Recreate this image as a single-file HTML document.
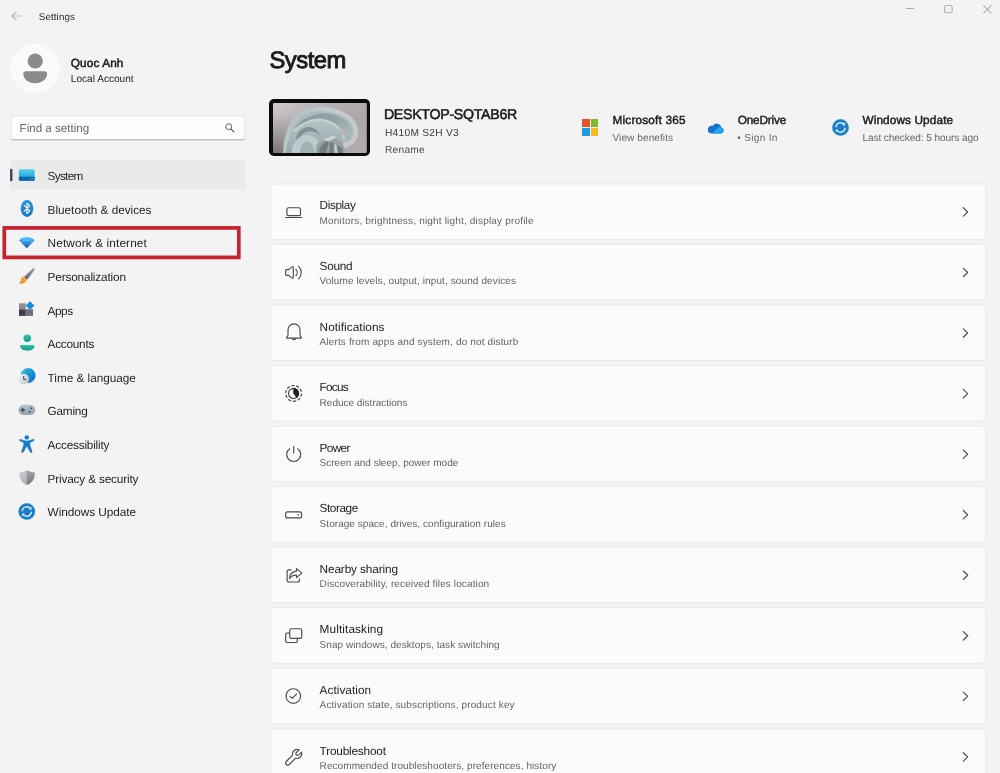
<!DOCTYPE html>
<html><head><meta charset="utf-8"><title>Settings</title>
<style>
*{box-sizing:border-box;margin:0;padding:0}
html,body{width:1000px;height:773px;overflow:hidden;background:#f3f3f3}
body{font-family:"Liberation Sans",sans-serif;color:#1b1b1b;position:relative}
.t{position:absolute;white-space:nowrap;line-height:1}
.abs{position:absolute}
svg{position:absolute;overflow:visible}
</style></head><body>

<!-- title bar -->
<svg style="left:10.9px;top:11px" width="11" height="10" viewBox="0 0 11 10"><path d="M10.5 5H1M4.8 1L.8 5l4 4" fill="none" stroke="#bdbdbd" stroke-width="1.1" stroke-linecap="round" stroke-linejoin="round"/></svg>
<svg style="left:906px;top:8.1px" width="8" height="1" viewBox="0 0 8 1"><path d="M0 .5h8" stroke="#ababab" stroke-width="1"/></svg>
<svg style="left:944.2px;top:5.2px" width="8.7" height="8.3" viewBox="0 0 8.7 8.3"><rect x=".55" y=".55" width="7.6" height="7.2" rx="1.5" fill="none" stroke="#b3b3b3" stroke-width="1.1"/></svg>
<svg style="left:983px;top:5px" width="8.8" height="8.8" viewBox="0 0 8.8 8.8"><path d="M.3.3l8.2 8.2M8.5.3l-8.2 8.2" stroke="#a8a8a8" stroke-width="1.05"/></svg>

<!-- avatar -->
<svg style="left:0;top:0" width="70" height="100" viewBox="0 0 70 100"><circle cx="35.2" cy="68.5" r="25" fill="#fafafa"/></svg>
<svg style="left:22px;top:52.8px" width="26" height="31" viewBox="0 0 26 31"><circle cx="13.2" cy="8" r="7.6" fill="#8b8b8b"/><path d="M3.9 18.2h18.6a2.6 2.6 0 0 1 2.6 2.6c0 5.4-4.9 9.4-11.9 9.4S1.3 26.2 1.3 20.8a2.6 2.6 0 0 1 2.6-2.6z" fill="#8b8b8b"/></svg>

<!-- search -->
<svg style="left:0;top:0" width="250" height="150" viewBox="0 0 250 150"><defs><clipPath id="sbc"><rect x="10.5" y="115.2" width="234.8" height="25.2" rx="3.5"/></clipPath></defs><rect x="11" y="115.7" width="233.8" height="24.2" rx="3.2" fill="#fdfdfd" stroke="#e3e3e3" stroke-width="1"/><rect x="10.5" y="139.5" width="234.8" height=".9" fill="#8f8f8f" clip-path="url(#sbc)"/></svg>
<svg style="left:224.8px;top:123.4px" width="10" height="10" viewBox="0 0 10 10"><circle cx="3.7" cy="3.7" r="3" fill="none" stroke="#5f5f5f" stroke-width="1"/><path d="M6 6l3 3" stroke="#5f5f5f" stroke-width="1.1" stroke-linecap="round"/></svg>

<!-- nav -->
<svg style="left:0;top:0" width="250" height="200" viewBox="0 0 250 200"><rect x="10" y="160.2" width="235.5" height="29.4" rx="3.5" fill="#eaeaea"/><rect x="10" y="168.7" width="2.5" height="12.5" rx="1.25" fill="#3d4a63"/></svg>
<svg style="left:0;top:0" width="250" height="270" viewBox="0 0 250 270"><rect x="4.3" y="227.9" width="234.5" height="29.5" fill="none" stroke="#c6232f" stroke-width="3.7"/></svg>

<!-- device thumbnail -->
<div class="abs" style="left:269.2px;top:99.2px;width:101.2px;height:56.8px;background:#0b0b0b;border-radius:5px"></div>

<div id="cards">
<svg style="left:0;top:0" width="1000" height="773" viewBox="0 0 1000 773">
<rect x="270.6" y="183.9" width="715.4" height="55.6" rx="3.6" fill="#fbfbfb" stroke="#e9e9e9" stroke-width="1"/>
<path d="M963.3 207.75l4.4 4.2-4.4 4.2" fill="none" stroke="#505050" stroke-width="1.2" stroke-linecap="round" stroke-linejoin="round"/>
<rect x="270.6" y="244.45" width="715.4" height="55.6" rx="3.6" fill="#fbfbfb" stroke="#e9e9e9" stroke-width="1"/>
<path d="M963.3 268.3l4.4 4.2-4.4 4.2" fill="none" stroke="#505050" stroke-width="1.2" stroke-linecap="round" stroke-linejoin="round"/>
<rect x="270.6" y="305" width="715.4" height="55.6" rx="3.6" fill="#fbfbfb" stroke="#e9e9e9" stroke-width="1"/>
<path d="M963.3 328.85l4.4 4.2-4.4 4.2" fill="none" stroke="#505050" stroke-width="1.2" stroke-linecap="round" stroke-linejoin="round"/>
<rect x="270.6" y="365.55" width="715.4" height="55.6" rx="3.6" fill="#fbfbfb" stroke="#e9e9e9" stroke-width="1"/>
<path d="M963.3 389.4l4.4 4.2-4.4 4.2" fill="none" stroke="#505050" stroke-width="1.2" stroke-linecap="round" stroke-linejoin="round"/>
<rect x="270.6" y="426.1" width="715.4" height="55.6" rx="3.6" fill="#fbfbfb" stroke="#e9e9e9" stroke-width="1"/>
<path d="M963.3 449.95l4.4 4.2-4.4 4.2" fill="none" stroke="#505050" stroke-width="1.2" stroke-linecap="round" stroke-linejoin="round"/>
<rect x="270.6" y="486.65" width="715.4" height="55.6" rx="3.6" fill="#fbfbfb" stroke="#e9e9e9" stroke-width="1"/>
<path d="M963.3 510.5l4.4 4.2-4.4 4.2" fill="none" stroke="#505050" stroke-width="1.2" stroke-linecap="round" stroke-linejoin="round"/>
<rect x="270.6" y="547.2" width="715.4" height="55.6" rx="3.6" fill="#fbfbfb" stroke="#e9e9e9" stroke-width="1"/>
<path d="M963.3 571.05l4.4 4.2-4.4 4.2" fill="none" stroke="#505050" stroke-width="1.2" stroke-linecap="round" stroke-linejoin="round"/>
<rect x="270.6" y="607.75" width="715.4" height="55.6" rx="3.6" fill="#fbfbfb" stroke="#e9e9e9" stroke-width="1"/>
<path d="M963.3 631.6l4.4 4.2-4.4 4.2" fill="none" stroke="#505050" stroke-width="1.2" stroke-linecap="round" stroke-linejoin="round"/>
<rect x="270.6" y="668.3" width="715.4" height="55.6" rx="3.6" fill="#fbfbfb" stroke="#e9e9e9" stroke-width="1"/>
<path d="M963.3 692.15l4.4 4.2-4.4 4.2" fill="none" stroke="#505050" stroke-width="1.2" stroke-linecap="round" stroke-linejoin="round"/>
<rect x="270.6" y="728.85" width="715.4" height="55.6" rx="3.6" fill="#fbfbfb" stroke="#e9e9e9" stroke-width="1"/>
<path d="M963.3 752.7l4.4 4.2-4.4 4.2" fill="none" stroke="#505050" stroke-width="1.2" stroke-linecap="round" stroke-linejoin="round"/>
</svg>
</div>
<!-- sidebar icons -->
<svg style="left:0;top:0" width="60" height="530" viewBox="0 0 60 530">
<defs>
<linearGradient id="gSys" x1="0" y1="0" x2="0" y2="1"><stop offset="0" stop-color="#55d4ea"/><stop offset="1" stop-color="#1690cf"/></linearGradient>
<linearGradient id="gBt" x1="0" y1="0" x2="0" y2="1"><stop offset="0" stop-color="#2496e2"/><stop offset="1" stop-color="#1576c8"/></linearGradient>
<linearGradient id="gWifi" x1="0" y1="0" x2="0" y2="1"><stop offset="0" stop-color="#6ccbf5"/><stop offset=".45" stop-color="#2a95e0"/><stop offset="1" stop-color="#0d4f9f"/></linearGradient>
<linearGradient id="gBrH" x1="1" y1="0" x2="0" y2="1"><stop offset="0" stop-color="#a2a8b0"/><stop offset="1" stop-color="#5e636b"/></linearGradient>
<linearGradient id="gBrT" x1="1" y1="0" x2="0" y2="1"><stop offset="0" stop-color="#f4b048"/><stop offset="1" stop-color="#ea8a1e"/></linearGradient>
<linearGradient id="gAcc" x1="0" y1="0" x2="0" y2="1"><stop offset="0" stop-color="#2cc2a8"/><stop offset="1" stop-color="#179a8c"/></linearGradient>
<linearGradient id="gGlobe" x1="0" y1="0" x2="1" y2="1"><stop offset="0" stop-color="#3fd0e4"/><stop offset=".5" stop-color="#1c9ad8"/><stop offset="1" stop-color="#1468c0"/></linearGradient>
<linearGradient id="gClock" x1="0" y1="0" x2="1" y2="1"><stop offset="0" stop-color="#f4f4f6"/><stop offset="1" stop-color="#c4c6cc"/></linearGradient>
<linearGradient id="gPad" x1="0" y1="0" x2="0" y2="1"><stop offset="0" stop-color="#bcc3cb"/><stop offset="1" stop-color="#969ea8"/></linearGradient>
<linearGradient id="gShL" x1="0" y1="0" x2="1" y2="1"><stop offset="0" stop-color="#d4d7db"/><stop offset="1" stop-color="#a4a8ae"/></linearGradient>
<linearGradient id="gShR" x1="0" y1="0" x2="0" y2="1"><stop offset="0" stop-color="#a0a4aa"/><stop offset="1" stop-color="#76797f"/></linearGradient>
</defs>
<!-- System -->
<rect x="18.9" y="169.3" width="15.7" height="11.4" rx="1.3" fill="url(#gSys)"/>
<path d="M18.9 176.8h15.7v2.6a1.3 1.3 0 0 1-1.3 1.3H20.2a1.3 1.3 0 0 1-1.3-1.3z" fill="#0e66aa"/>
<rect x="30.5" y="178.4" width="1" height=".9" fill="#8fd8f4"/><rect x="32.2" y="178.4" width="1" height=".9" fill="#8fd8f4"/>
<!-- Bluetooth -->
<ellipse cx="27" cy="208.4" rx="6.3" ry="8.5" fill="url(#gBt)"/>
<path d="M24.1 205.4l5.7 5.5-2.9 2.7v-10.4l2.9 2.7-5.7 5.5" fill="none" stroke="#fff" stroke-width="1.05" stroke-linejoin="round" stroke-linecap="round"/>
<!-- Network -->
<path d="M26.8 248.2L18.9 240.2a11.2 11.2 0 0 1 15.8 0z" fill="url(#gWifi)"/>
<path d="M21.3 242.6a7.8 7.8 0 0 1 11 0" fill="none" stroke="#8fd8f8" stroke-opacity=".55" stroke-width=".9"/>
<path d="M23.6 244.9a4.5 4.5 0 0 1 6.4 0" fill="none" stroke="#5eb4ee" stroke-opacity=".5" stroke-width=".8"/>
<!-- Personalization -->
<path d="M32.9 268.3c1.1-.8 2.5.5 1.7 1.7l-7.6 10-3.1-3z" fill="url(#gBrH)"/>
<path d="M23.6 276.6l3.2 3.2c-.6 2.6-3.6 4.3-7.9 4 1.6-1.1 1.5-2.3 1.7-3.8.2-1.8 1.4-3.1 3-3.4z" fill="url(#gBrT)"/>
<!-- Apps -->
<rect x="19" y="303.3" width="6.8" height="6" fill="#8b9098"/>
<rect x="19" y="309.3" width="6.8" height="6.6" fill="#3b3f46"/>
<rect x="25.8" y="309.3" width="7.2" height="6.6" fill="#6b7079"/>
<path d="M30 301.3l4.4 4.3-4.4 4.3-4.3-4.3z" fill="#1b8be2"/>
<!-- Accounts -->
<circle cx="27.3" cy="338.3" r="3.8" fill="url(#gAcc)"/>
<path d="M21.6 344.9h11.4a1.4 1.4 0 0 1 1.4 1.4c0 2.7-3 4.4-7.1 4.4s-7.1-1.7-7.1-4.4a1.4 1.4 0 0 1 1.4-1.4z" fill="url(#gAcc)"/>
<!-- Time & language -->
<circle cx="28.1" cy="375.5" r="7.5" fill="url(#gGlobe)"/>
<path d="M24.5 369.5c2.5 1 4.5 3 5 6.5M31 368.8c1.8 2.6 2.4 6.4 1.2 10.5" fill="none" stroke="#0f62b4" stroke-opacity=".45" stroke-width=".9"/>
<circle cx="23.7" cy="379" r="5.2" fill="url(#gClock)"/>
<path d="M23.7 376.3v3h2.3" fill="none" stroke="#3a3f4a" stroke-width="1" stroke-linecap="round" stroke-linejoin="round"/>
<!-- Gaming -->
<rect x="18.5" y="404.7" width="16.8" height="10.3" rx="5.1" fill="url(#gPad)"/>
<path d="M22.8 408.2v3.4M21.1 409.9h3.4" stroke="#2d3b5c" stroke-width="1.1" stroke-linecap="round"/>
<circle cx="31.3" cy="408.2" r="1.05" fill="#2a58a8"/><circle cx="29.5" cy="411.7" r="1.05" fill="#2a58a8"/>
<!-- Accessibility -->
<circle cx="26.8" cy="437.4" r="2.2" fill="#1b7bc8"/>
<path d="M20.6 439.4c2 .9 4 1.5 6.2 1.5s4.2-.6 6.2-1.5c.9-.4 1.5.8.7 1.3-1.3.8-2.6 1.4-3.9 1.8v2.5l2.2 6.3c.4 1.2-1.3 1.8-1.8.7l-3.4-6.3-3.4 6.3c-.5 1.1-2.2.5-1.8-.7l2.2-6.3v-2.5c-1.3-.4-2.6-1-3.9-1.8-.8-.5-.2-1.7.7-1.3z" fill="#1b7bc8" stroke="#1b7bc8" stroke-width=".6" stroke-linejoin="round"/>
<!-- Privacy -->
<path d="M27 470.3c2.4 1.3 4.9 2 7.9 2.1 0 6.5-2.6 10.4-7.9 12.6z" fill="url(#gShR)"/>
<path d="M27 470.3c-2.4 1.3-4.9 2-7.9 2.1 0 6.5 2.6 10.4 7.9 12.6z" fill="url(#gShL)"/>
<!-- Windows Update -->
<circle cx="26.8" cy="511.5" r="8.3" fill="#1a7bc2"/>
<circle cx="26.8" cy="511.5" r="8" fill="none" stroke="#3eb0ea" stroke-opacity=".6" stroke-width=".7"/>
<path d="M22.3 510.7a4.6 4.6 0 0 1 8.2-2.1M31.3 512.3a4.6 4.6 0 0 1-8.2 2.1" fill="none" stroke="#d6f2ff" stroke-width="1.4" stroke-linecap="round"/>
<path d="M31.5 506.6v2.9h-2.9zM22.1 516.4v-2.9h2.9z" fill="#d6f2ff"/>
</svg>
<!-- device thumbnail -->
<svg style="left:272.9px;top:102.7px" width="93.9" height="50.1" viewBox="0 0 93.9 50.1">
<defs>
<linearGradient id="tbg" x1="0" y1="0" x2="1" y2=".9"><stop offset="0" stop-color="#cfcbcd"/><stop offset=".3" stop-color="#b9b4b6"/><stop offset=".65" stop-color="#aca6a9"/><stop offset="1" stop-color="#b1aaad"/></linearGradient>
<radialGradient id="tbg2" cx="0" cy="1" r=".8"><stop offset="0" stop-color="#6e6a6c" stop-opacity=".9"/><stop offset=".6" stop-color="#868284" stop-opacity=".35"/><stop offset="1" stop-color="#8a8688" stop-opacity="0"/></radialGradient>
<linearGradient id="b1" x1="0" y1=".3" x2="1" y2=".7"><stop offset="0" stop-color="#b3bfc1"/><stop offset=".5" stop-color="#c3cccd"/><stop offset="1" stop-color="#c6c8c9"/></linearGradient>
<linearGradient id="b2" x1="0" y1="0" x2="1" y2=".6"><stop offset="0" stop-color="#8c9da1"/><stop offset=".55" stop-color="#8fa1a5"/><stop offset="1" stop-color="#a6b5b7"/></linearGradient>
<linearGradient id="b3" x1="0" y1="0" x2="0" y2="1"><stop offset="0" stop-color="#b6c3c5"/><stop offset="1" stop-color="#95a6a9"/></linearGradient>
<filter id="bl" x="-10%" y="-10%" width="120%" height="120%"><feGaussianBlur stdDeviation="4.5"/></filter>
<clipPath id="tc"><rect width="93.9" height="50.1" rx="1.3"/></clipPath>
</defs>
<g clip-path="url(#tc)">
<rect width="93.9" height="50.1" fill="url(#tbg)"/>
<rect width="93.9" height="50.1" fill="url(#tbg2)"/>
<g transform="translate(-12.9,-12.7) scale(.14)" filter="url(#bl)">
<path d="M165 470C163 380 175 300 230 205 280 140 360 118 430 118 520 118 610 150 660 200 705 250 712 310 690 350 670 385 630 410 600 420L585 470z" fill="url(#b1)"/>
<path d="M197 470C195 390 207 310 257 228 302 168 370 148 430 148 510 148 588 174 633 217 670 257 676 305 658 338 643 362 620 372 600 372L540 470z" fill="#adbabc"/>
<path d="M240 292C265 225 330 185 430 165 490 160 560 180 620 222 660 262 665 300 645 335 630 352 610 355 600 350 595 320 585 295 560 268 530 238 490 216 440 210 370 206 300 235 240 292z" fill="url(#b2)"/>
<path d="M185 470C185 400 200 340 240 292 300 235 370 206 440 210 490 216 530 238 560 268 585 295 595 320 600 350 600 370 590 385 570 395L470 430 440 470z" fill="url(#b3)"/>
<path d="M240 292C300 235 370 206 440 210 490 216 530 238 560 268 585 295 595 320 600 350" fill="none" stroke="#c7d1d2" stroke-width="15"/>
<ellipse cx="588" cy="296" rx="17" ry="30" transform="rotate(-28 588 296)" fill="#b7b2b4"/>
<path d="M258 352C258 300 298 268 340 262 385 260 412 290 428 322 402 300 375 290 345 294 305 300 285 330 280 368z" fill="#7f9196"/>
<path d="M226 470C220 400 250 350 300 325 345 310 387 325 412 360L442 470z" fill="#bdc9ca"/>
<path d="M285 470C280 410 300 375 330 368 365 366 386 395 396 470z" fill="#a0b1b4"/>
<path d="M405 385L470 347 520 330 552 350 592 385 606 420 600 470H395z" fill="#98a2a4"/>
<path d="M425 410L480 355 492 375 462 470H420zM500 365L528 380 518 470H494zM548 388L585 410 598 470H560z" fill="#737c7e"/>
<path d="M450 352L520 322 548 338 485 366zM530 386L546 392 552 470H540z" fill="#ccd3d3"/>
</g>
</g>
</svg>

<!-- Microsoft logo -->
<div class="abs" style="left:582.2px;top:119.3px;width:7.7px;height:8px;background:#e9512b"></div>
<div class="abs" style="left:590.8px;top:119.3px;width:7.7px;height:8px;background:#7eba29"></div>
<div class="abs" style="left:582.2px;top:128.2px;width:7.7px;height:8px;background:#1c9be1"></div>
<div class="abs" style="left:590.8px;top:128.2px;width:7.7px;height:8px;background:#f9b91c"></div>

<!-- OneDrive cloud -->
<svg style="left:707.3px;top:121.8px" width="16.8" height="11.8" viewBox="0 0 16.8 11.8">
<defs><linearGradient id="od1" x1="0" y1="0" x2="1" y2="1"><stop offset="0" stop-color="#1468c8"/><stop offset="1" stop-color="#1a86dc"/></linearGradient></defs>
<path d="M4 11.6h9.6a3.1 3.1 0 0 0 .7-6.1 4.6 4.6 0 0 0-8.5-1.7A4 4 0 0 0 4 11.6z" fill="url(#od1)"/>
<path d="M6.5 11.6h7.1a3.1 3.1 0 0 0 .7-6.1 3.8 3.8 0 0 0-3.3.6c-2.5 1.8-4 3.5-4.5 5.5z" fill="#2aa4ea"/>
</svg>

<!-- Windows Update header icon -->
<svg style="left:831.5px;top:118.6px" width="17" height="17" viewBox="18.3 503 17 17">
<circle cx="26.8" cy="511.5" r="8.3" fill="#1a7bc2"/>
<circle cx="26.8" cy="511.5" r="8" fill="none" stroke="#3eb0ea" stroke-opacity=".6" stroke-width=".7"/>
<path d="M22.3 510.7a4.6 4.6 0 0 1 8.2-2.1M31.3 512.3a4.6 4.6 0 0 1-8.2 2.1" fill="none" stroke="#d6f2ff" stroke-width="1.4" stroke-linecap="round"/>
<path d="M31.5 506.6v2.9h-2.9zM22.1 516.4v-2.9h2.9z" fill="#d6f2ff"/>
</svg>

<!-- card icons -->
<svg style="left:0;top:0" width="320" height="773" viewBox="0 0 320 773" fill="none" stroke="#4b4b4b" stroke-width="1.15" stroke-linecap="round" stroke-linejoin="round">
<!-- Display -->
<rect x="286.9" y="207.7" width="13.6" height="7.9" rx="1.6"/>
<path d="M285.5 217.5h16.4"/>
<!-- Sound -->
<path d="M285.7 270.4a.8.8 0 0 1 .8-.8h2.3l3.3-2.7c.5-.4 1.2 0 1.2.6v10c0 .6-.7 1-1.2.6l-3.3-2.7h-2.3a.8.8 0 0 1-.8-.8z"/>
<path d="M295.9 269.3a4.6 4.6 0 0 1 0 6.4M298.5 266.2a8.6 8.6 0 0 1 0 12.6"/>
<!-- Notifications -->
<path d="M288 337.8v-5.6a6 6 0 0 1 12 0v5.6l1.3 1.9c.2.3 0 .7-.4.7h-13.8c-.4 0-.6-.4-.4-.7z" transform="translate(0,-2.3)"/>
<path d="M292.2 338.3a1.9 1.9 0 0 0 3.6 0"/>
<!-- Focus -->
<circle cx="293.6" cy="393.4" r="7.9" stroke-dasharray="3.3 1.65" stroke-linecap="butt" stroke-width="1.2"/>
<circle cx="293.6" cy="393.4" r="5.1"/>
<path d="M293.6 388.3a5.1 5.1 0 0 1 3 9.2l-3-4.1z" fill="#222" stroke="#222" stroke-width=".6"/>
<!-- Power -->
<path d="M293.7 446.5v6.5"/>
<path d="M289.7 448.8a7 7 0 1 0 8 0"/>
<!-- Storage -->
<rect x="285.6" y="511.9" width="16" height="6" rx="2"/>
<circle cx="298.3" cy="514.9" r=".8" fill="#4b4b4b" stroke="none"/>
<!-- Nearby sharing -->
<path d="M291.2 569.9h-2.1a2 2 0 0 0-2 2v8.1a2 2 0 0 0 2 2h8.4a2 2 0 0 0 2-2v-1.3"/>
<path d="M296.5 568.6l5.3 4.5-5.3 4.5v-2.5c-3.5-.2-5.5 1-7 3.4.2-4 2.5-7 7-7.4z"/>
<!-- Multitasking -->
<rect x="289.7" y="628.7" width="12" height="9.6" rx="1.6"/>
<path d="M289.7 633h-2.4a1.6 1.6 0 0 0-1.6 1.6v6.3a1.6 1.6 0 0 0 1.6 1.6h8.4a1.6 1.6 0 0 0 1.6-1.6v-2.6"/>
<!-- Activation -->
<circle cx="293.3" cy="696" r="7.3"/>
<path d="M289.9 696.1l2.3 2.3 4.4-4.5"/>
<!-- Troubleshoot -->
<path d="M299.2 749.9a4.7 4.7 0 0 0-6.6 5.3l-6.3 6.3a2.1 2.1 0 0 0 3 3l6.3-6.3a4.7 4.7 0 0 0 5.9-6l-2.7 2.7a1.7 1.7 0 0 1-2.4-2.4z"/>
</svg>

<div id="texts" style="position:absolute;left:0;top:0;width:1000px;height:773px;will-change:transform;text-rendering:geometricPrecision;filter:blur(.35px)">
<div class="t" style="left:38.8px;top:13px;font-size:9.8px;letter-spacing:0.1px;color:#2a2a2a">Settings</div>
<div class="t" style="left:70.8px;top:58px;font-size:11.8px;letter-spacing:0.11px;color:#1a1a1a;-webkit-text-stroke:0.5px #1a1a1a">Quoc Anh</div>
<div class="t" style="left:70.8px;top:75px;font-size:10.1px;letter-spacing:0px;color:#1f1f1f">Local Account</div>
<div class="t" style="left:19.6px;top:123px;font-size:11.6px;letter-spacing:0px;color:#656565">Find a setting</div>
<div class="t" style="left:47.6px;top:171px;font-size:11.8px;letter-spacing:-0.72px;color:#1f1f1f">System</div>
<div class="t" style="left:47.6px;top:205px;font-size:11.8px;letter-spacing:-0.02px;color:#1f1f1f">Bluetooth &amp; devices</div>
<div class="t" style="left:47.6px;top:238px;font-size:11.8px;letter-spacing:0.13px;color:#1f1f1f">Network &amp; internet</div>
<div class="t" style="left:47.6px;top:272px;font-size:11.8px;letter-spacing:-0.16px;color:#1f1f1f">Personalization</div>
<div class="t" style="left:47.6px;top:306px;font-size:11.8px;letter-spacing:-0.46px;color:#1f1f1f">Apps</div>
<div class="t" style="left:47.6px;top:339px;font-size:11.8px;letter-spacing:-0.26px;color:#1f1f1f">Accounts</div>
<div class="t" style="left:47.6px;top:373px;font-size:11.8px;letter-spacing:-0.03px;color:#1f1f1f">Time &amp; language</div>
<div class="t" style="left:47.6px;top:406px;font-size:11.8px;letter-spacing:-0.23px;color:#1f1f1f">Gaming</div>
<div class="t" style="left:47.6px;top:440px;font-size:11.8px;letter-spacing:-0.2px;color:#1f1f1f">Accessibility</div>
<div class="t" style="left:47.6px;top:474px;font-size:11.8px;letter-spacing:-0.17px;color:#1f1f1f">Privacy &amp; security</div>
<div class="t" style="left:47.6px;top:507px;font-size:11.8px;letter-spacing:-0.06px;color:#1f1f1f">Windows Update</div>
<div class="t" style="left:269.5px;top:49px;font-size:23.8px;letter-spacing:-0.5px;color:#1b1b1b;-webkit-text-stroke:0.9px #1b1b1b">System</div>
<div class="t" style="left:383.9px;top:108px;font-size:14.2px;letter-spacing:-0.29px;color:#1b1b1b;-webkit-text-stroke:0.55px #1b1b1b">DESKTOP-SQTAB6R</div>
<div class="t" style="left:385px;top:129px;font-size:10.2px;letter-spacing:0.26px;color:#3c3c3c">H410M S2H V3</div>
<div class="t" style="left:385px;top:146px;font-size:10.2px;letter-spacing:0.23px;color:#4d4d4d">Rename</div>
<div class="t" style="left:612.5px;top:115px;font-size:11.8px;letter-spacing:0.19px;color:#1b1b1b;-webkit-text-stroke:0.45px #1b1b1b">Microsoft 365</div>
<div class="t" style="left:612.5px;top:134px;font-size:10.1px;letter-spacing:0.06px;color:#686868">View benefits</div>
<div class="t" style="left:737.7px;top:115px;font-size:11.8px;letter-spacing:-0.18px;color:#1b1b1b;-webkit-text-stroke:0.45px #1b1b1b">OneDrive</div>
<div class="t" style="left:737.2px;top:134px;font-size:10.1px;letter-spacing:0.31px;color:#686868">• Sign In</div>
<div class="t" style="left:862.4px;top:115px;font-size:11.8px;letter-spacing:0.12px;color:#1b1b1b;-webkit-text-stroke:0.45px #1b1b1b">Windows Update</div>
<div class="t" style="left:862.4px;top:134px;font-size:10.1px;letter-spacing:-0.09px;color:#686868">Last checked: 5 hours ago</div>
<div class="t" style="left:319.6px;top:200px;font-size:11.8px;letter-spacing:-0.4px;color:#1c1c1c">Display</div>
<div class="t" style="left:319.6px;top:217px;font-size:10px;letter-spacing:0.18px;color:#636363">Monitors, brightness, night light, display profile</div>
<div class="t" style="left:319.6px;top:261px;font-size:11.8px;letter-spacing:-0.29px;color:#1c1c1c">Sound</div>
<div class="t" style="left:319.6px;top:277px;font-size:10px;letter-spacing:0.11px;color:#636363">Volume levels, output, input, sound devices</div>
<div class="t" style="left:319.6px;top:322px;font-size:11.8px;letter-spacing:0.05px;color:#1c1c1c">Notifications</div>
<div class="t" style="left:319.6px;top:338px;font-size:10px;letter-spacing:0.14px;color:#636363">Alerts from apps and system, do not disturb</div>
<div class="t" style="left:319.6px;top:382px;font-size:11.8px;letter-spacing:-0.78px;color:#1c1c1c">Focus</div>
<div class="t" style="left:319.6px;top:399px;font-size:10px;letter-spacing:0px;color:#636363">Reduce distractions</div>
<div class="t" style="left:319.6px;top:443px;font-size:11.8px;letter-spacing:-0.65px;color:#1c1c1c">Power</div>
<div class="t" style="left:319.6px;top:459px;font-size:10px;letter-spacing:0.01px;color:#636363">Screen and sleep, power mode</div>
<div class="t" style="left:319.6px;top:503px;font-size:11.8px;letter-spacing:-0.44px;color:#1c1c1c">Storage</div>
<div class="t" style="left:319.6px;top:520px;font-size:10px;letter-spacing:0.05px;color:#636363">Storage space, drives, configuration rules</div>
<div class="t" style="left:319.6px;top:564px;font-size:11.8px;letter-spacing:-0.12px;color:#1c1c1c">Nearby sharing</div>
<div class="t" style="left:319.6px;top:580px;font-size:10px;letter-spacing:0.12px;color:#636363">Discoverability, received files location</div>
<div class="t" style="left:319.6px;top:624px;font-size:11.8px;letter-spacing:0.11px;color:#1c1c1c">Multitasking</div>
<div class="t" style="left:319.6px;top:641px;font-size:10px;letter-spacing:0.06px;color:#636363">Snap windows, desktops, task switching</div>
<div class="t" style="left:319.6px;top:685px;font-size:11.8px;letter-spacing:0.04px;color:#1c1c1c">Activation</div>
<div class="t" style="left:319.6px;top:701px;font-size:10px;letter-spacing:0.14px;color:#636363">Activation state, subscriptions, product key</div>
<div class="t" style="left:319.6px;top:746px;font-size:11.8px;letter-spacing:-0.19px;color:#1c1c1c">Troubleshoot</div>
<div class="t" style="left:319.6px;top:762px;font-size:10px;letter-spacing:0.08px;color:#636363">Recommended troubleshooters, preferences, history</div>
</div>
</body></html>
